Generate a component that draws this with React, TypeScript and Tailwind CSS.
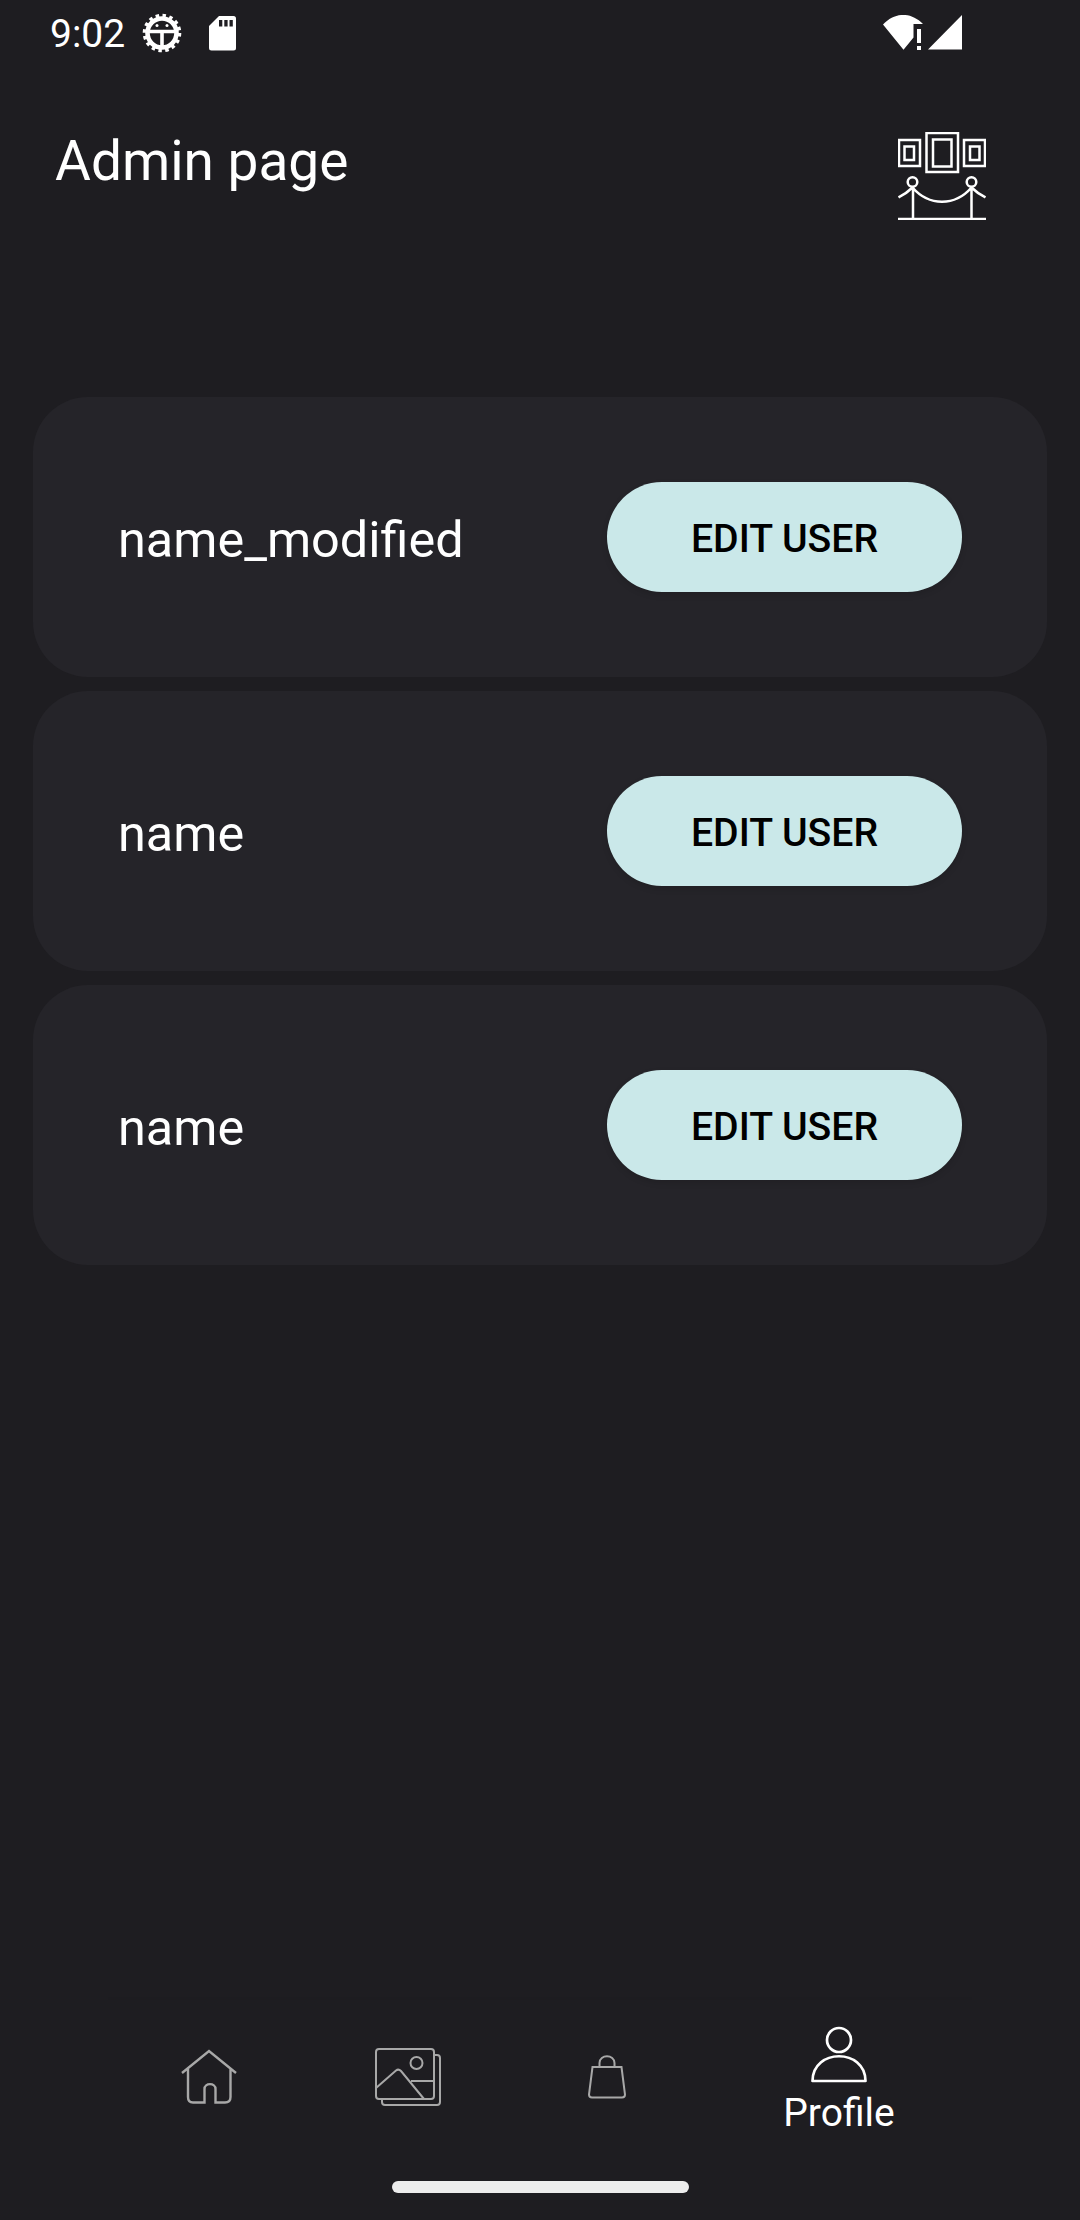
import React from "react";

const users = ["name_modified", "name", "name"];

function StatusBar() {
  return (
    <div className="flex h-[66px] items-start justify-between pl-[50px] pr-[118px]">
      <div className="flex h-[66px] items-center text-[39px] leading-none text-white">
        <span className="w-[75px] pt-[3px]">9:02</span>
        <svg className="ml-[16px]" width="42" height="42" viewBox="-21 -21 42 42" fill="none" stroke="#fff">
          <circle r="14.5" strokeWidth="4.6" />
          <circle r="17.200" strokeWidth="4.2" strokeDasharray="3.377 3.377" />
          <path d="M-13 -1.5H13M0 0V14" strokeWidth="3.6" />
          <circle cx="-5" cy="-7.500" r="1.5" fill="#fff" stroke="none" />
          <circle cx="5" cy="-7.500" r="1.5" fill="#fff" stroke="none" />
        </svg>
        <svg className="ml-[26px]" width="27" height="35" viewBox="0 0 27 35">
          <path fill="#fff" d="M10 0H24.500A2.500 2.500 0 0 1 27 2.500V32A2.500 2.500 0 0 1 24.500 34.500H2.500A2.500 2.500 0 0 1 0 32V10Z" />
          <path fill="#1e1d21" d="M10 4h3.300v6.500H10zM15.300 4h3.300v6.500h-3.300zM20.500 4h3.300v6.500h-3.300z" />
        </svg>
      </div>
      <svg className="mt-[15px]" width="79" height="35" viewBox="0 0 79 35" fill="#fff">
        <path d="M0 9.500C12 -3.200 28 -3.200 40 9H30.500V22.500L20.500 34.700Z" />
        <path d="M34 14h4v14h-4zM34 31h4v4h-4zM45 34.500L79 0V34.500Z" />
      </svg>
    </div>
  );
}

function GalleryLogo() {
  return (
    <svg width="88" height="88" viewBox="0 0 88 88" fill="none" stroke="#fff" strokeWidth="2.500">
      <path d="M1 8h21v26H1zM6.500 14.500h9.500v13.500h-9.500zM66 8h21v26H66zM72 14.500h9.500v13.500H72z" />
      <path d="M28.500 1h31.500v39h-31.500zM35 7.500h18.500v27h-18.500z" />
      <circle cx="14.500" cy="50" r="4.800" />
      <circle cx="73.500" cy="50" r="4.800" />
      <path d="M15 55V87M73.500 55V87M0 87H88M0.500 65.500Q9 61 14.500 55.500C31 74.500 57 74.500 73.500 55.500Q79 61 87.500 65.500" />
    </svg>
  );
}

function UserCard({ name }: { name: string }) {
  return (
    <li className="flex h-[280px] items-center justify-between rounded-[55px] bg-[#252429] pl-[85px] pr-[85px]">
      <span className="pt-[5px] text-[50.4px] leading-[58px] text-white">{name}</span>
      <button className="h-[110px] w-[355px] rounded-[55px] bg-[#cae8e9] pt-[6px] text-[39.2px] font-medium leading-none text-black shadow-[0_3px_6px_rgba(0,0,0,0.12)]">
        EDIT USER
      </button>
    </li>
  );
}

function BottomNav() {
  return (
    <nav className="flex h-[223px] flex-col bg-[#1e1d21]">
      <div className="mx-[108px] h-[3px] bg-[#1d1c20]" />
      <div className="flex h-[167px] items-start text-[#a8a8a8]">
        <svg className="ml-[181px] mt-[49px]" width="56" height="56" viewBox="0 0 56 56" fill="none" stroke="currentColor" strokeWidth="2.400">
          <path d="M1 24L28 2L55 24M7 20V48Q7 53.500 12 53.500H23.500V40C23.500 33.500 34.500 33.500 34.500 40V53.500H44Q49.500 53.500 49.500 48V20" />
        </svg>
        <svg className="ml-[138px] mt-[48px]" width="66" height="58" viewBox="0 0 66 58" fill="none" stroke="currentColor" strokeWidth="2">
          <rect x="1" y="1" width="58" height="50" rx="3" />
          <path d="M59 7H62Q65 7 65 10V54Q65 57 62 57H10Q7 57 7 54V51M1 40L21 22.500Q23.500 20.500 26 23L49 51M36 33H59" />
          <circle cx="41.500" cy="15" r="6" />
        </svg>
        <svg className="ml-[147px] mt-[55px]" width="38" height="44" viewBox="0 0 38 44" fill="none" stroke="currentColor" strokeWidth="2">
          <path d="M4.500 12H33.500L37 39.500Q37 42.500 34 42.500H4Q1 42.500 1 39.500ZM11.500 12V8C11.500 -1 26.500 -1 26.500 8V12" />
        </svg>
        <div className="ml-[157px] mt-[26px] flex w-[112px] flex-col items-center text-white">
          <svg width="56" height="57" viewBox="0 0 56 57" fill="none" stroke="currentColor" strokeWidth="2.700">
            <circle cx="28" cy="14" r="12" />
            <path d="M1.500 55C1.500 22 54.500 22 54.500 55Z" strokeLinejoin="round" />
          </svg>
          <span className="mt-[8px] text-[39px] leading-[45px]">Profile</span>
        </div>
      </div>
      <div className="mx-auto mt-[14px] h-[12px] w-[297px] rounded-full bg-[#ededed]" />
    </nav>
  );
}

export default function App() {
  return (
    <div className="flex h-[2220px] w-[1080px] flex-col bg-[#1e1d21] font-['Roboto',sans-serif]">
      <StatusBar />
      <header className="flex h-[331px] items-start justify-between pl-[55px] pr-[94px] pt-[66px]">
        <h1 className="-mt-[3px] text-[55px] leading-[64px] text-white">Admin page</h1>
        <GalleryLogo />
      </header>
      <ul className="flex flex-1 flex-col gap-[14px] px-[33px]">
        {users.map((name, i) => (
          <UserCard key={i} name={name} />
        ))}
      </ul>
      <BottomNav />
    </div>
  );
}
